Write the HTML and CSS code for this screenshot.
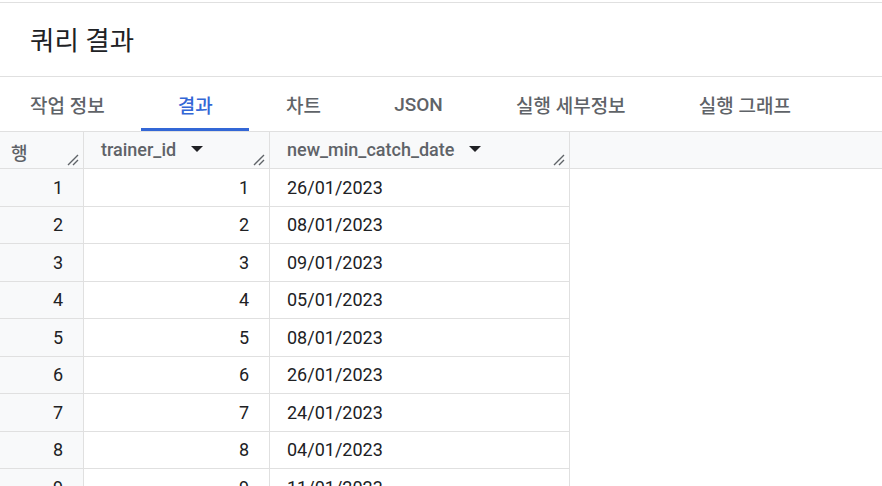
FILE: index.html
```html
<!DOCTYPE html>
<html lang="ko">
<head>
<meta charset="utf-8">
<link rel="stylesheet" href="styles.css">
</head>
<body>
<div class="panel">
  <div class="title-bar"><h1 class="title">쿼리 결과</h1></div>
  <nav class="tabs">
    <div class="tab first">작업 정보</div>
    <div class="tab active">결과</div>
    <div class="tab">차트</div>
    <div class="tab">JSON</div>
    <div class="tab">실행 세부정보</div>
    <div class="tab">실행 그래프</div>
  </nav>
  <div class="grid">
    <div class="hcell rownum-h">행<svg class="grip" viewBox="0 0 12 12"><path d="M1 11 L11 1 M6 11 L11 6"/></svg></div>
    <div class="hcell">trainer_id<svg class="caret" viewBox="0 0 12 7"><path d="M0 0 H12 L6 6 Z"/></svg><svg class="grip" viewBox="0 0 12 12"><path d="M1 11 L11 1 M6 11 L11 6"/></svg></div>
    <div class="hcell">new_min_catch_date<svg class="caret" viewBox="0 0 12 7"><path d="M0 0 H12 L6 6 Z"/></svg><svg class="grip" viewBox="0 0 12 12"><path d="M1 11 L11 1 M6 11 L11 6"/></svg></div>
    <div class="hcell filler"></div>

    <div class="cell num">1</div><div class="cell r">1</div><div class="cell">26/01/2023</div><div class="cell blank"></div>
    <div class="cell num">2</div><div class="cell r">2</div><div class="cell">08/01/2023</div><div class="cell blank"></div>
    <div class="cell num">3</div><div class="cell r">3</div><div class="cell">09/01/2023</div><div class="cell blank"></div>
    <div class="cell num">4</div><div class="cell r">4</div><div class="cell">05/01/2023</div><div class="cell blank"></div>
    <div class="cell num">5</div><div class="cell r">5</div><div class="cell">08/01/2023</div><div class="cell blank"></div>
    <div class="cell num">6</div><div class="cell r">6</div><div class="cell">26/01/2023</div><div class="cell blank"></div>
    <div class="cell num">7</div><div class="cell r">7</div><div class="cell">24/01/2023</div><div class="cell blank"></div>
    <div class="cell num">8</div><div class="cell r">8</div><div class="cell">04/01/2023</div><div class="cell blank"></div>
    <div class="cell num">9</div><div class="cell r">9</div><div class="cell">11/01/2023</div><div class="cell blank"></div>
  </div>
</div>
</body>
</html>
```

FILE: styles.css
```css
html, body {
  margin: 0;
  padding: 0;
  background: #ffffff;
  overflow: hidden;
}
body {
  font-family: Roboto, "Noto Sans CJK KR", sans-serif;
  color: #202124;
}
.panel {
  margin-top: 2px;
  border-top: 1px solid #e0e0e0;
}
.title-bar {
  height: 73px;
  border-bottom: 1px solid #e0e0e0;
  display: flex;
  align-items: center;
  padding-left: 30px;
}
.title {
  margin: 0;
  font-size: 26.5px;
  font-weight: 400;
  color: #202124;
  position: relative;
  top: -1px;
}
.tabs {
  display: flex;
  height: 54px;
  border-bottom: 1px solid #e0e0e0;
}
.tab {
  display: flex;
  align-items: center;
  padding: 0 36.6px;
  font-size: 19px;
  font-weight: 500;
  color: #5f6368;
  border-bottom: 3px solid transparent;
  box-sizing: border-box;
  height: 54px;
  padding-top: 3px;
}
.tab.first { padding-left: 30px; }
.tab.active {
  color: #3367d6;
  border-bottom-color: #3367d6;
}
.grid {
  display: grid;
  grid-template-columns: 84px 186px 300px 1fr;
  grid-auto-rows: 37.5px;
  grid-template-rows: 37px;
}
.hcell {
  position: relative;
  background: #f8f9fa;
  border-bottom: 1px solid #e0e0e0;
  border-right: 1px solid #e0e0e0;
  display: flex;
  align-items: center;
  padding-left: 17px;
  font-size: 18px;
  font-weight: 500;
  color: #5f6368;
  box-sizing: border-box;
  padding-bottom: 2px;
}
.hcell.rownum-h {
  padding-left: 11px;
  align-items: flex-start;
  padding-top: 7px;
}
.hcell.filler { border-right: 0; }
.caret {
  width: 12px;
  height: 7px;
  margin-left: 15px;
  fill: #202124;
}
.grip {
  position: absolute;
  right: 4px;
  bottom: 2px;
  width: 12px;
  height: 12px;
  stroke: #5f6368;
  stroke-width: 1.4;
  fill: none;
}
.cell {
  border-bottom: 1px solid #e0e0e0;
  border-right: 1px solid #e0e0e0;
  display: flex;
  align-items: center;
  padding: 0 17px;
  font-size: 18px;
  color: #202124;
  box-sizing: border-box;
}
.cell.num {
  background: #f8f9fa;
  justify-content: flex-end;
  padding-right: 20px;
}
.cell.r {
  justify-content: flex-end;
  padding-right: 20px;
}
.cell.blank {
  border: 0;
}
```
